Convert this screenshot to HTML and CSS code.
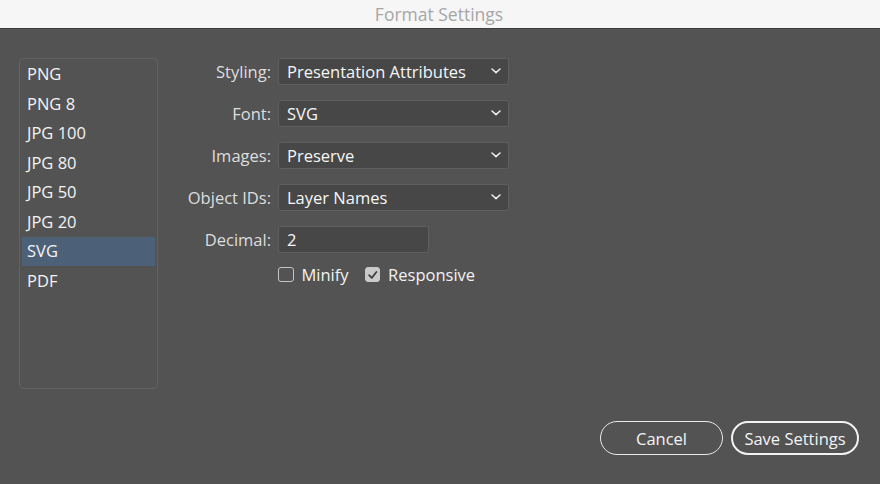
FILE: index.html
```html
<!DOCTYPE html>
<html>
<head>
<meta charset="utf-8">
<title>Format Settings</title>
<link rel="stylesheet" href="styles.css">
</head>
<body>
<div class="window">
  <header class="titlebar">Format Settings</header>
  <main class="content">
    <div class="top">
      <ul class="list">
        <li class="item">PNG</li>
        <li class="item">PNG 8</li>
        <li class="item">JPG 100</li>
        <li class="item">JPG 80</li>
        <li class="item">JPG 50</li>
        <li class="item">JPG 20</li>
        <li class="item selected">SVG</li>
        <li class="item">PDF</li>
      </ul>
      <div class="form">
        <label class="label">Styling:</label>
        <div class="select"><span>Presentation Attributes</span><svg class="chev" viewBox="0 0 10 6"><path d="M1 1 L5 4.6 L9 1" /></svg></div>
        <label class="label">Font:</label>
        <div class="select"><span>SVG</span><svg class="chev" viewBox="0 0 10 6"><path d="M1 1 L5 4.6 L9 1" /></svg></div>
        <label class="label">Images:</label>
        <div class="select"><span>Preserve</span><svg class="chev" viewBox="0 0 10 6"><path d="M1 1 L5 4.6 L9 1" /></svg></div>
        <label class="label">Object IDs:</label>
        <div class="select"><span>Layer Names</span><svg class="chev" viewBox="0 0 10 6"><path d="M1 1 L5 4.6 L9 1" /></svg></div>
        <label class="label">Decimal:</label>
        <div class="input">2</div>
        <div class="spacer"></div>
        <div class="checks">
          <div class="check"><span class="box"></span><span>Minify</span></div>
          <div class="check"><span class="box on"><svg viewBox="0 0 14 14"><path d="M3.2 7.2 L6 10 L10.8 3.8" /></svg></span><span>Responsive</span></div>
        </div>
      </div>
    </div>
    <div class="actions">
      <button class="btn">Cancel</button>
      <button class="btn primary">Save Settings</button>
    </div>
  </main>
</div>
</body>
</html>
```
FILE: styles.css
```css
* { box-sizing: border-box; }
html, body { margin: 0; padding: 0; }
body {
  width: 880px;
  height: 484px;
  overflow: hidden;
  background: #535353;
  font-family: "Open Sans", "Liberation Sans", sans-serif;
  font-weight: 500;
}
.window {
  width: 880px;
  height: 484px;
  display: flex;
  flex-direction: column;
}
.titlebar {
  height: 29px;
  flex: none;
  background: #f6f6f6;
  border-bottom: 1px solid #3e3e3e;
  color: #a6a6a6;
  font-size: 17.5px;
  font-weight: 400;
  text-align: center;
  line-height: 28px;
  padding-right: 2px;
}
.content {
  flex: 1;
  display: flex;
  flex-direction: column;
  padding: 29px 21px 29px 19px;
}
.top {
  display: flex;
  align-items: flex-start;
}
.list {
  list-style: none;
  margin: 0;
  padding: 1px 2px 0 2px;
  width: 139px;
  height: 331px;
  border: 1px solid #626262;
  border-radius: 4px;
  display: flex;
  flex-direction: column;
  gap: 1.2px;
}
.item {
  height: 28.4px;
  line-height: 28.4px;
  padding-left: 5px;
  color: #f4f4f4;
  font-size: 16.5px;
}
.item.selected {
  background: #4c6178;
}
.form {
  margin-left: 21px;
  display: grid;
  grid-template-columns: 92px auto;
  column-gap: 7px;
  row-gap: 15.5px;
  align-items: center;
  justify-items: start;
}
.label {
  justify-self: end;
  color: #dedede;
  font-size: 16.5px;
}
.select, .input {
  height: 26.5px;
  background: #474747;
  border: 1px solid #5f5f5f;
  border-radius: 3px;
  color: #f6f6f6;
  font-size: 16.5px;
  display: flex;
  align-items: center;
  padding-left: 8px;
}
.select {
  width: 231px;
  justify-content: space-between;
  padding-right: 7px;
}
.input {
  width: 151px;
}
.chev {
  width: 10px;
  height: 6px;
  fill: none;
  stroke: #f0f0f0;
  stroke-width: 1.5;
  stroke-linecap: round;
  stroke-linejoin: round;
}
.spacer { height: 1px; }
.checks {
  display: flex;
  gap: 16px;
  margin-top: -5px;
}
.check {
  display: flex;
  align-items: center;
  gap: 8px;
  color: #f2f2f2;
  font-size: 16.5px;
}
.box {
  width: 15.5px;
  height: 15.5px;
  border: 1.2px solid #c4c4c4;
  border-radius: 3px;
  display: flex;
  align-items: center;
  justify-content: center;
}
.box.on {
  background: #cacaca;
  border-color: #cacaca;
}
.box svg {
  width: 14px;
  height: 14px;
  fill: none;
  stroke: #3e3e3e;
  stroke-width: 1.8;
  stroke-linecap: round;
  stroke-linejoin: round;
}
.actions {
  margin-top: auto;
  display: flex;
  justify-content: flex-end;
  gap: 8px;
}
.btn {
  font-family: "Open Sans", "Liberation Sans", sans-serif;
  font-size: 16.5px;
  font-weight: 500;
  color: #f4f4f4;
  background: transparent;
  border: 1.5px solid #eaeaea;
  border-radius: 17px;
  height: 34px;
  width: 123px;
  padding: 0;
}
.btn.primary {
  width: 128px;
  border-width: 2.5px;
  border-color: #f2f2f2;
}
```
